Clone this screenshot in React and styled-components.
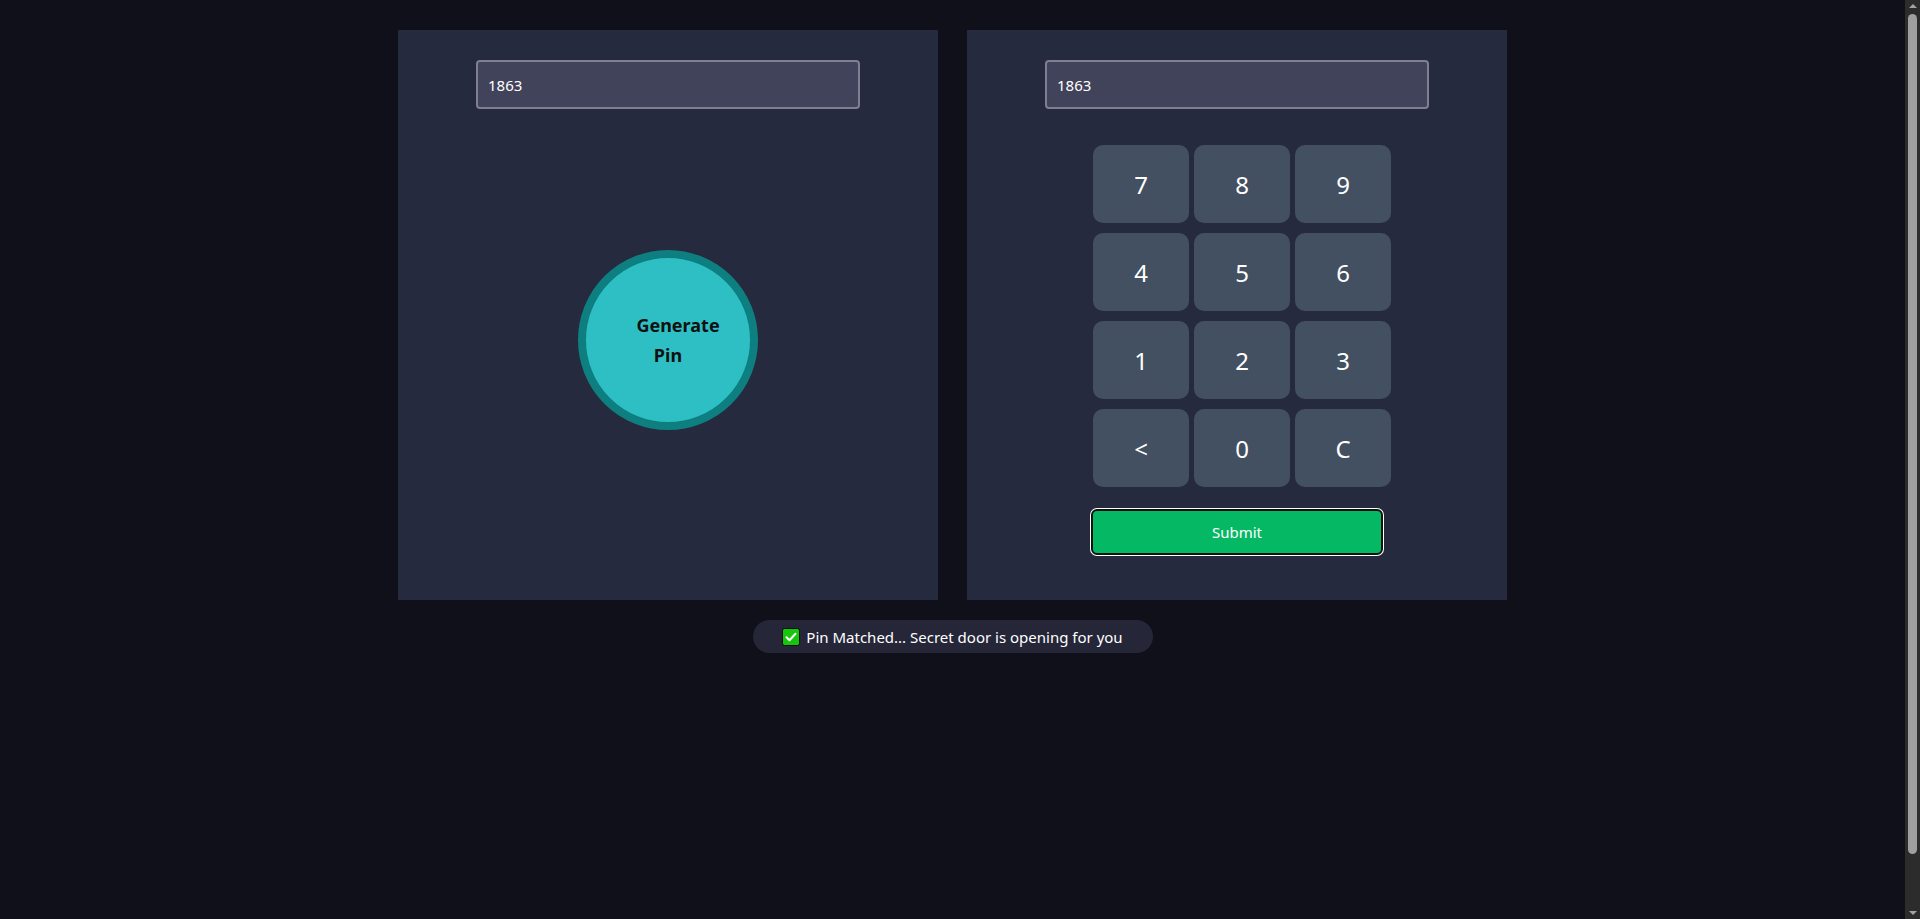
import React, { useState } from "react";
import styled, { createGlobalStyle } from "styled-components";

const GlobalStyle = createGlobalStyle`
  html {
    color-scheme: dark;
  }
  body {
    margin: 0;
    background: #0f1019;
    font-family: "Segoe UI", "Noto Sans", sans-serif;
    color: #fff;
  }
  * {
    box-sizing: border-box;
  }
`;

const Page = styled.div`
  box-sizing: content-box;
  min-height: 100vh;
  padding: 30px 15px 24px 0;
  display: flex;
  flex-direction: column;
  align-items: center;
`;

const Panels = styled.div`
  display: flex;
  gap: 29px;
`;

const Panel = styled.section`
  width: 540px;
  height: 570px;
  background: #262a3e;
  padding-top: 30px;
  display: flex;
  flex-direction: column;
  align-items: center;
`;

const PinInput = styled.input`
  width: 384px;
  height: 49px;
  padding: 0 10px;
  background: #41435a;
  border: 2px solid #7f7e95;
  border-radius: 4px;
  color: #fff;
  font-family: inherit;
  font-size: 15px;
  outline: none;
`;

const GenerateButton = styled.button`
  margin-top: 141px;
  width: 180px;
  height: 180px;
  border-radius: 50%;
  border: 8px solid #0e7f80;
  background: #2ebfc4;
  color: #111;
  font-family: inherit;
  font-size: 18px;
  font-weight: 700;
  line-height: 30px;
  text-align: center;
  text-indent: 20px;
  padding: 0 20px;
  cursor: pointer;
`;

const Keypad = styled.div`
  margin-top: 36px;
  padding-left: 10px;
  display: grid;
  grid-template-columns: repeat(3, 96px);
  grid-auto-rows: 78px;
  column-gap: 5px;
  row-gap: 10px;
`;

const Key = styled.button`
  border: none;
  border-radius: 10px;
  background: #435062;
  color: #fff;
  font-family: inherit;
  font-size: 24px;
  cursor: pointer;
`;

const SubmitButton = styled.button`
  margin-top: 22px;
  width: 292px;
  height: 46px;
  border: 2px solid #101010;
  border-radius: 6px;
  box-shadow: 0 0 0 1px #fff;
  background: #05b864;
  color: #fff;
  font-family: inherit;
  font-size: 15px;
  cursor: pointer;
`;

const Status = styled.div`
  margin-top: 20px;
  width: 400px;
  height: 33px;
  border-radius: 17px;
  background: #252638;
  display: flex;
  align-items: center;
  justify-content: center;
  gap: 6px;
  font-size: 15px;
  color: #fff;
`;

/* stand-in for the browser's dark scrollbar seen in the screenshot */
const ScrollTrack = styled.div`
  position: fixed;
  top: 0;
  right: 0;
  width: 15px;
  height: 100vh;
  background: #2c2c2c;
  display: flex;
  flex-direction: column;
  align-items: center;
  padding: 4px 0;
`;

const Arrow = styled.div`
  width: 0;
  height: 0;
  border-left: 4px solid transparent;
  border-right: 4px solid transparent;
  ${({ $down }) =>
    $down ? "border-top: 4px solid #a3a3a3;" : "border-bottom: 4px solid #a3a3a3;"}
`;

const Thumb = styled.div`
  width: 9px;
  height: 840px;
  margin-top: 6px;
  border-radius: 5px;
  background: #9f9f9f;
  flex: none;
`;

const Spacer = styled.div`
  flex: 1;
`;

const CheckMark = () => (
  <svg width="18" height="18" viewBox="0 0 18 18">
    <rect x="0.5" y="0.5" width="17" height="17" rx="2" fill="#16c60c" stroke="#0c0c0c" />
    <path d="M4.5 9.2l3 3 6-6.5" fill="none" stroke="#fff" strokeWidth="2" strokeLinecap="round" strokeLinejoin="round" />
  </svg>
);

const keys = ["7", "8", "9", "4", "5", "6", "1", "2", "3", "<", "0", "C"];

const App = () => {
  const [pin, setPin] = useState("1863");
  const [typed, setTyped] = useState("1863");

  const press = (k) => {
    if (k === "C") setTyped("");
    else if (k === "<") setTyped((t) => t.slice(0, -1));
    else setTyped((t) => t + k);
  };

  return (
    <>
      <GlobalStyle />
      <Page>
        <Panels>
          <Panel>
            <PinInput value={pin} readOnly />
            <GenerateButton
              onClick={() => setPin(String(1000 + Math.floor(Math.random() * 9000)))}
            >
              Generate Pin
            </GenerateButton>
          </Panel>
          <Panel>
            <PinInput value={typed} readOnly />
            <Keypad>
              {keys.map((k) => (
                <Key key={k} onClick={() => press(k)}>
                  {k}
                </Key>
              ))}
            </Keypad>
            <SubmitButton>Submit</SubmitButton>
          </Panel>
        </Panels>
        <Status>
          <CheckMark />
          Pin Matched... Secret door is opening for you
        </Status>
      </Page>
      <ScrollTrack>
        <Arrow />
        <Thumb />
        <Spacer />
        <Arrow $down />
      </ScrollTrack>
    </>
  );
};

export default App;
